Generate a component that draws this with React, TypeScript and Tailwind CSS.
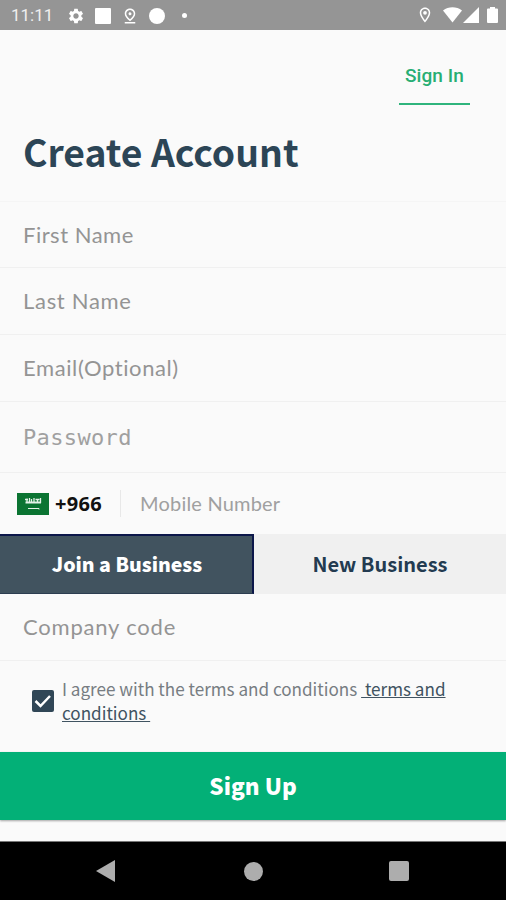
import React, { useState } from "react";
import {
  MdOutlineLocationOn,
  MdOutlinePinDrop,
  MdSettings,
} from "react-icons/md";

interface FieldProps {
  label: string;
  className: string;
}

const StatusBar = () => {
  return (
    <div className="flex h-[30px] items-center justify-between bg-[#959595] text-white">
      <div className="flex items-center pt-px pl-[11px]">
        <span className="w-[56px] font-['Roboto',sans-serif] text-[17px] leading-none text-[#efefef]">
          11:11
        </span>
        <MdSettings className="h-[18px] w-[18px]" />
        <span className="ml-[10px] h-4 w-4 rounded-[1px] bg-white" />
        <MdOutlinePinDrop className="ml-[10px] h-[18px] w-[18px]" />
        <span className="ml-[10px] h-4 w-4 rounded-full bg-white" />
        <span className="ml-[17px] h-[5px] w-[5px] rounded-full bg-white" />
      </div>
      <div className="flex items-center pr-[8px]">
        <MdOutlineLocationOn className="mr-[9px] h-[18px] w-[18px]" />
        <svg width="19" height="16" viewBox="0 0 19 16" fill="currentColor">
          <path d="M0 3.5C5.5-.8 13.500-.8 19 3.500L9.500 15.500z" />
        </svg>
        <svg
          className="ml-[1px]"
          width="16"
          height="16"
          viewBox="0 0 16 16"
          fill="currentColor"
        >
          <path d="M16 0v16H0z" />
        </svg>
        <svg
          className="ml-[8px]"
          width="11"
          height="16"
          viewBox="0 0 11 16"
          fill="currentColor"
        >
          <path d="M3 0h5v1.500h2q1 0 1 1V15q0 1-1 1H1q-1 0-1-1V2.500q0-1 1-1h2z" />
        </svg>
      </div>
    </div>
  );
};

const Field = ({ label, className }: FieldProps) => {
  return (
    <div
      className={`flex items-center border-b border-[#f0f0f0] pl-[23px] font-['Lato',sans-serif] text-[22px] leading-none text-[#949494] ${className}`}
    >
      <span>{label}</span>
    </div>
  );
};

const Flag = () => {
  return (
    <svg width="32" height="22" viewBox="0 0 32 22">
      <rect width="32" height="22" fill="#0b7432" />
      <g stroke="#e5f2e8" fill="none">
        <path
          d="M8 6.500h3M10 5.500v4M12.500 5v5M14.500 6v3.500M17 5v5M18.500 6.500h4M20.500 7v3M23.500 5v5"
          strokeWidth="1.300"
        />
        <path d="M8.500 9.500h15.500" strokeWidth="2" />
        <path d="M11 15.500h11v1" strokeWidth="1" />
      </g>
    </svg>
  );
};

const App = () => {
  const [agreed, setAgreed] = useState<boolean>(true);

  return (
    <div className="flex h-[900px] w-[506px] flex-col overflow-hidden bg-[#fafafa]">
      <StatusBar />
      <div className="flex h-[75px] justify-end pr-[36px]">
        <div className="flex w-[71px] items-center justify-center border-b-2 border-[#2fb47c] pt-[17px] font-['Roboto',sans-serif] text-[19px] leading-none font-medium tracking-[0.1px] text-[#27ae73]">
          Sign In
        </div>
      </div>
      <h1 className="flex h-[97px] items-center border-b border-[#f5f5f5] pb-[2px] pl-[23px] font-['Noto_Sans_CJK_SC',sans-serif] text-[37.300px] leading-none font-bold text-[#2c4556]">
        Create Account
      </h1>
      <Field label="First Name" className="h-[66px] tracking-[0.5px]" />
      <Field label="Last Name" className="h-[67px] tracking-[0.7px]" />
      <Field label="Email(Optional)" className="h-[67px] tracking-[0.6px]" />
      <div className="flex h-[71px] items-center border-b border-[#f0f0f0] pt-[2px] pl-[23px] font-['DejaVu_Sans_Mono',monospace] text-[22px] leading-none tracking-[0.35px] text-[#a0a0a0]">
        Password
      </div>
      <div className="flex h-[61px] items-center pl-[17px]">
        <Flag />
        <span className="ml-[6px] w-[65px] font-['Noto_Sans',sans-serif] text-[20px] leading-none font-bold tracking-[0.3px] text-[#111]">
          +966
        </span>
        <span className="h-[27px] w-px bg-[#e8e8e8]" />
        <span className="mt-[-2px] ml-[19px] font-['Lato',sans-serif] text-[20px] leading-none tracking-[0.2px] text-[#a0a0a0]">
          Mobile Number
        </span>
      </div>
      <div className="flex h-[60px] font-['Noto_Sans_CJK_SC',sans-serif] text-[20px] leading-none font-bold">
        <button className="flex w-[254px] items-center justify-center border-t-2 border-r-2 border-b border-t-[#0c174a] border-r-[#0c174a] border-b-[#2c3d50] bg-[#41535f] pb-[2px] pl-[2px] text-[19.500px] font-black text-white">
          Join a Business
        </button>
        <button className="flex flex-1 items-center justify-center bg-[#f0f0f0] text-[#233b50]">
          New Business
        </button>
      </div>
      <Field label="Company code" className="h-[67px] tracking-[0.8px]" />
      <div className="flex h-[91px] items-center pl-[32px]">
        <button
          className="mt-[-11px] flex h-[22px] w-[22px] items-center justify-center rounded-[2px] bg-[#304656]"
          onClick={() => setAgreed(!agreed)}
        >
          {agreed && (
            <svg width="18" height="14" viewBox="0 0 18 14" fill="none">
              <path d="M1.500 7l5 5L16 2" stroke="#fff" strokeWidth="2.500" />
            </svg>
          )}
        </button>
        <p className="mt-[-12px] ml-[8px] font-['Noto_Sans_CJK_SC',sans-serif] text-[17.100px] leading-[24px] whitespace-pre text-[#777d82]">
          I agree with the terms and conditions{" "}
          <span className="text-[#405361] underline decoration-1">
            {" terms and"}
            <br />
            {"conditions "}
          </span>
        </p>
      </div>
      <button className="flex h-[68px] items-center justify-center bg-[#03b077] pb-[2px] font-['Noto_Sans_CJK_SC',sans-serif] text-[22.500px] leading-none font-black text-white shadow-[0_1px_2px_rgba(0,0,0,0.35)]">
        Sign Up
      </button>
      <div className="mt-[21px] flex h-[59px] items-center border-t border-[#777] bg-black text-[#adadad]">
        <svg
          className="ml-[96px]"
          width="19"
          height="22"
          viewBox="0 0 19 22"
          fill="currentColor"
        >
          <path d="M0 11L19 0v22z" />
        </svg>
        <span className="ml-[129px] h-[19px] w-[19px] rounded-full bg-[#adadad]" />
        <span className="ml-[126px] h-[20px] w-[20px] rounded-[2px] bg-[#adadad]" />
      </div>
    </div>
  );
};

export default App;
